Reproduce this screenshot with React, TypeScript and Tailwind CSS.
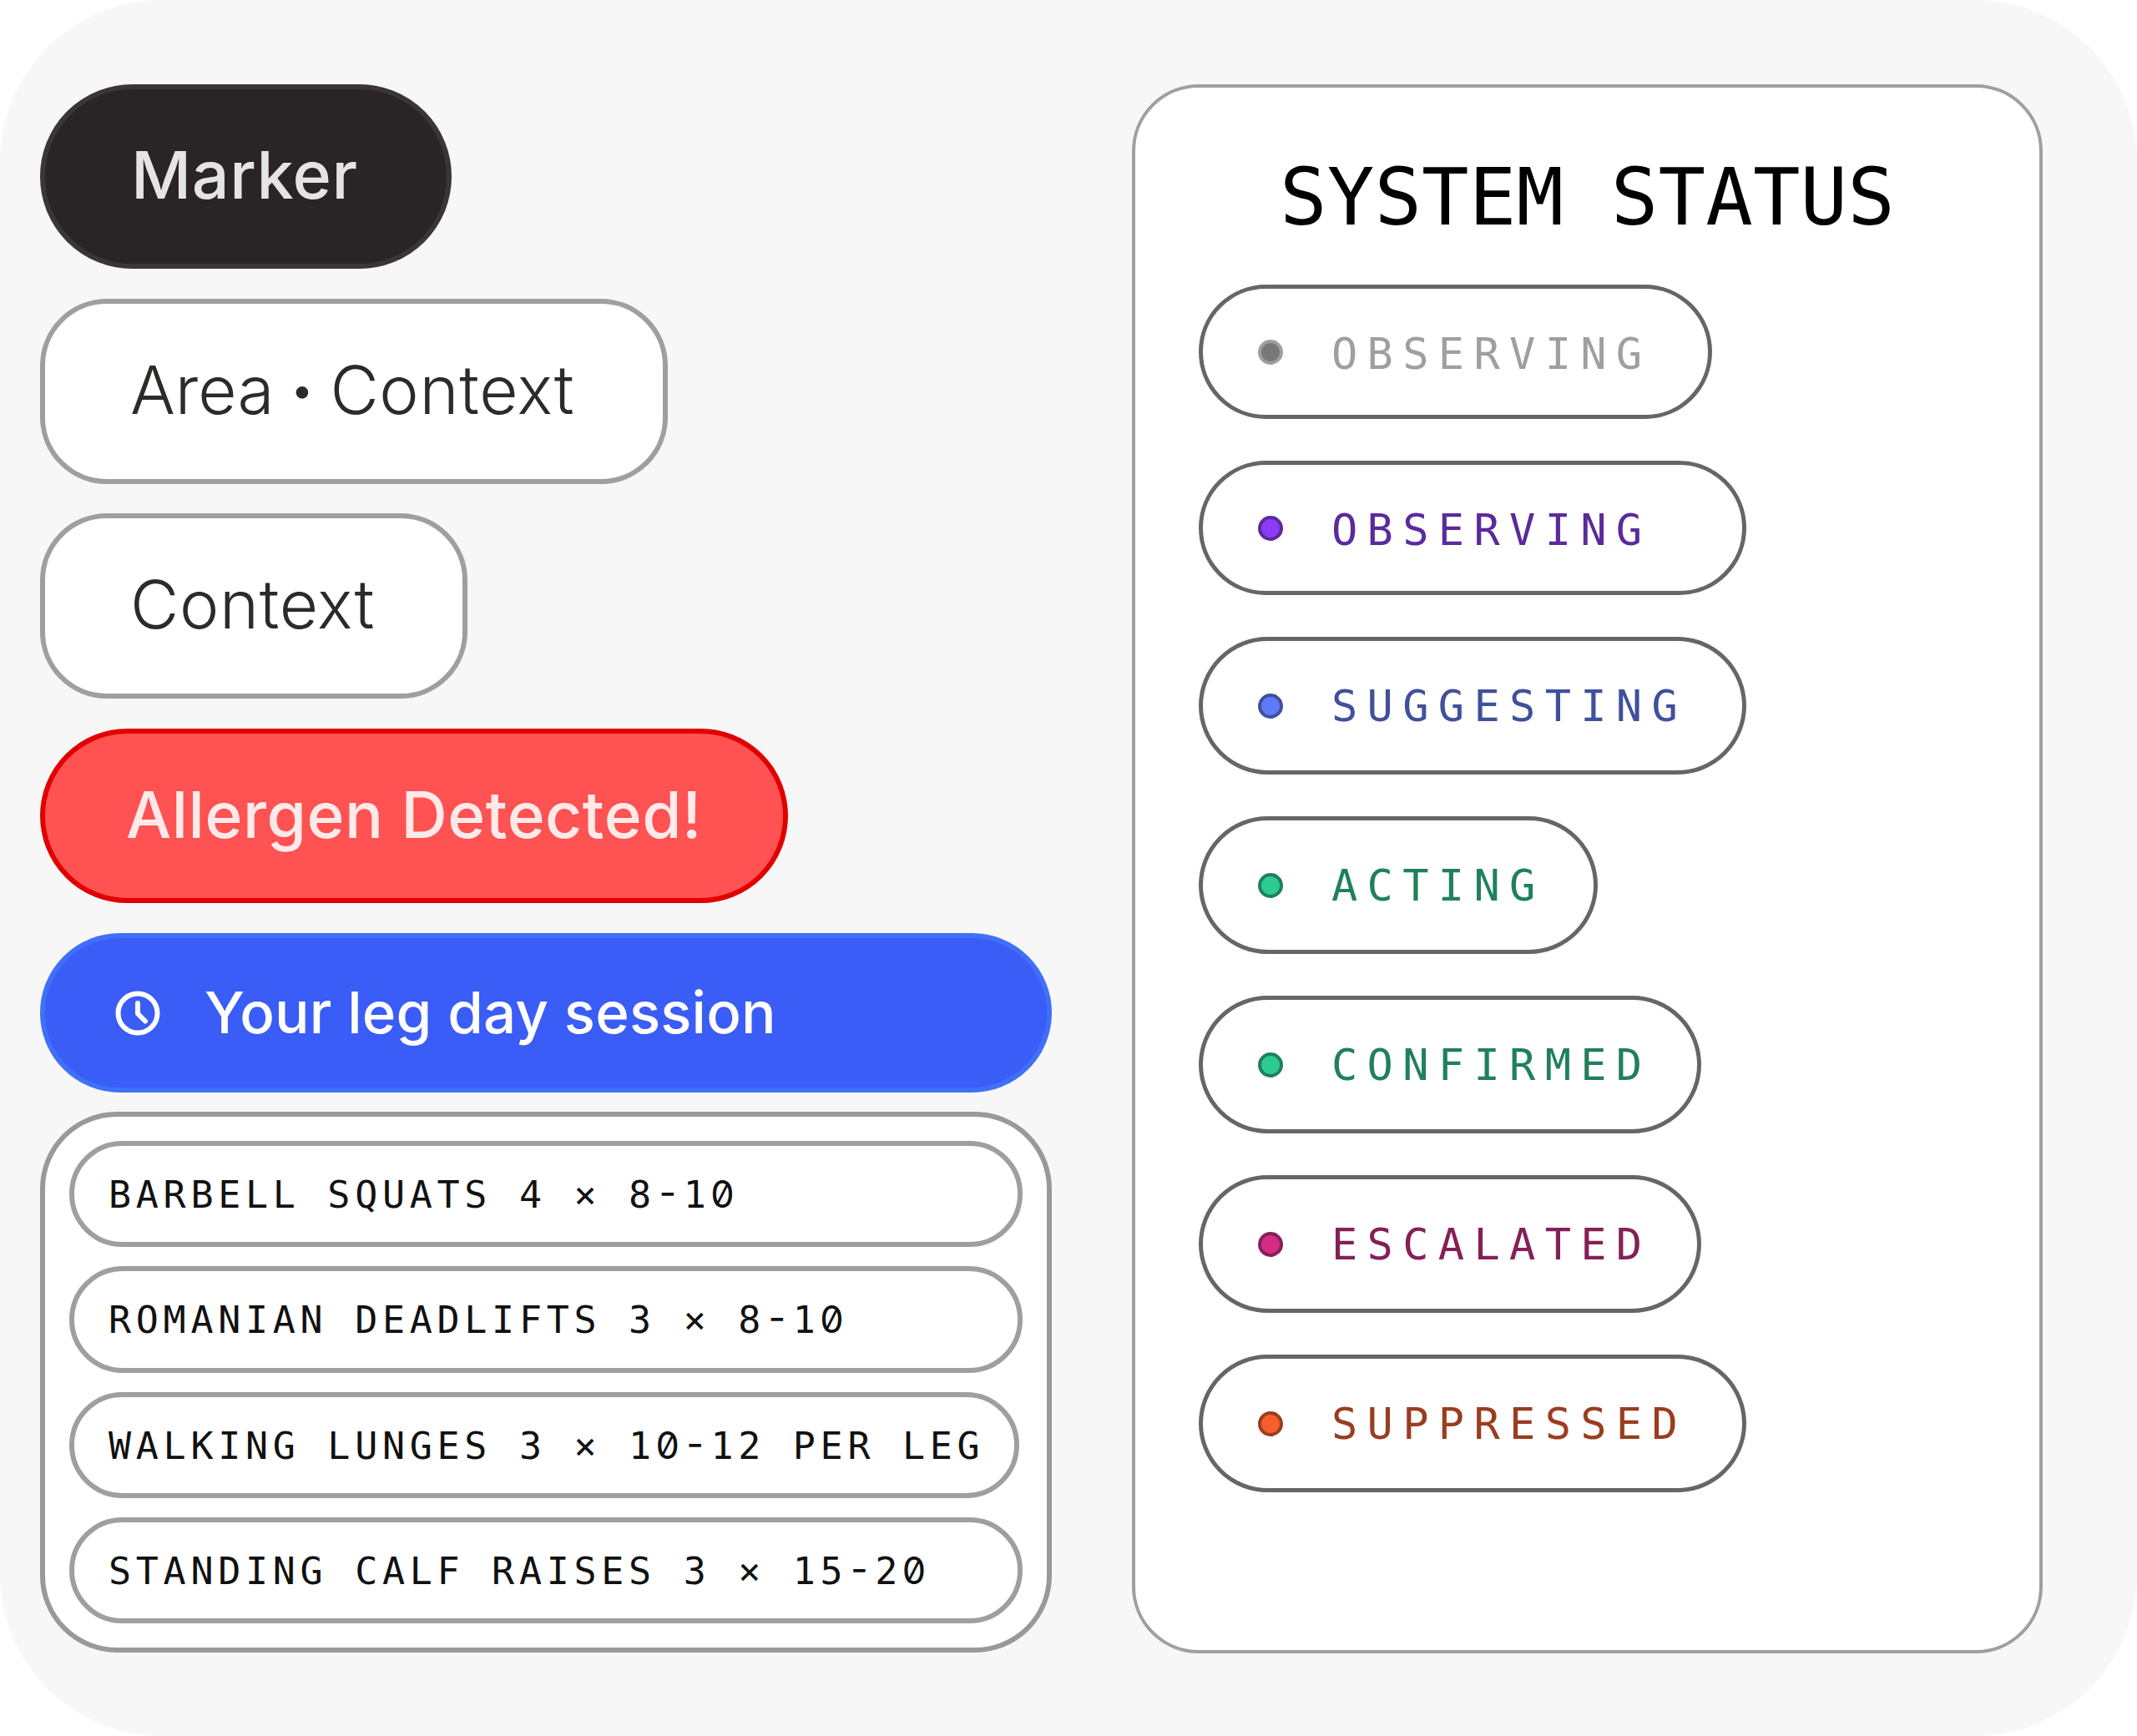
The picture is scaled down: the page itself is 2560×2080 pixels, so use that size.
import clsx from "clsx";

const exercises = [
  { label: "BARBELL SQUATS 4 × 8-10", width: "w-[1142px]" },
  { label: "ROMANIAN DEADLIFTS 3 × 8-10", width: "w-[1142px]" },
  { label: "WALKING LUNGES 3 × 10-12 PER LEG", width: "w-[1138px]" },
  { label: "STANDING CALF RAISES 3 × 15-20", width: "w-[1142px]" },
];

const statuses = [
  { label: "OBSERVING", box: "w-[615px] h-[161px] mb-[50px]", text: "text-[#9f9f9f] pt-[4px]", dot: "bg-[#787878] border-[#9f9f9f]" },
  { label: "OBSERVING", box: "w-[656px] h-[161px] mb-[50px]", text: "text-[#5b2a9b] pt-[4px]", dot: "bg-[#8c3cf7] border-[#5b2a9b]" },
  { label: "SUGGESTING", box: "w-[656px] h-[165px] mb-[50px]", text: "text-[#41509b] pt-[1px]", dot: "bg-[#5f7af7] border-[#41509b]" },
  { label: "ACTING", box: "w-[478px] h-[165px] mb-[50px]", text: "text-[#20805c] pt-[1px]", dot: "bg-[#2dcb91] border-[#20805c]" },
  { label: "CONFIRMED", box: "w-[602px] h-[165px] mb-[50px]", text: "text-[#20805c] pt-[1px]", dot: "bg-[#2dcb91] border-[#20805c]" },
  { label: "ESCALATED", box: "w-[602px] h-[165px] mb-[50px]", text: "text-[#852057] pt-[1px]", dot: "bg-[#d62a87] border-[#852057]" },
  { label: "SUPPRESSED", box: "w-[656px] h-[165px]", text: "text-[#9a3d1f] pt-[1px]", dot: "bg-[#f65f2d] border-[#9a3d1f]" },
];

const sans = "font-['Inter',sans-serif] leading-none whitespace-nowrap";
const mono = "font-['DejaVu_Sans_Mono',monospace] leading-none whitespace-pre";

function ClockIcon() {
  return (
    <svg className="w-[54px] h-[54px] shrink-0" viewBox="0 0 54 54" fill="none" stroke="white" strokeWidth="6" strokeLinecap="round" strokeLinejoin="round">
      <circle cx="27" cy="27" r="23.5" />
      <path d="M27 15v12.5l9 9" />
    </svg>
  );
}

// Slashed zeros and cap-height dashes come from Inter, set on the mono cell width
function MonoLabel({ text }: { text: string }) {
  return (
    <span className={clsx(mono, "pt-px text-[45px] tracking-[5.7px] text-[#111111]")}>
      {text.split(/([0-])/).map((part, i) =>
        part === "0" || part === "-" ? (
          <span key={i} className="inline-block w-[32.8px] -ml-[2.5px] mr-[2.5px] text-center tracking-normal font-['Inter',sans-serif] font-normal leading-none [font-feature-settings:'zero','case']">
            {part}
          </span>
        ) : (
          part
        )
      )}
    </span>
  );
}

function Tags() {
  return (
    <div className="flex flex-col items-start">
      <div className="w-[493px] h-[221px] mb-9 pl-[103px] pb-[5px] flex items-center rounded-full border-6 border-[#3a3538] bg-[#292526]">
        <span className={clsx(sans, "text-[79px] tracking-[0.6px] font-medium text-[#e4e4e4]")}>Marker</span>
      </div>
      <div className="w-[752px] h-[222px] mb-[35px] pl-[102px] pb-[5px] flex items-center rounded-[80px] border-6 border-[#9f9f9f] bg-white">
        <span className={clsx(sans, "text-[80px] font-light text-[#2b2b2a]")}>
          Area<span className="inline-block w-[67px] text-center text-[54px] leading-none align-[10px]">•</span>
          <span className="tracking-[0.7px]">Context</span>
        </span>
      </div>
      <div className="w-[512px] h-[222px] mb-9 pl-[102px] pb-[5px] flex items-center rounded-[80px] border-6 border-[#9f9f9f] bg-white">
        <span className={clsx(sans, "text-[80px] tracking-[0.7px] font-light text-[#2b2b2a]")}>Context</span>
      </div>
      <div className="w-[896px] h-[209px] mb-9 pl-[97px] pb-[2px] flex items-center rounded-full border-6 border-[#e10000] bg-[#ff5252]">
        <span className={clsx(sans, "text-[76.5px] tracking-[0.55px] font-medium text-[#ffe9e9]")}>Allergen Detected!</span>
      </div>
    </div>
  );
}

function Session() {
  return (
    <div className="w-[1212px]">
      <div className="h-[191px] mb-[23px] pl-[84px] flex items-center gap-[53px] rounded-full border-6 border-[#3f70f7] bg-[#3a5cf7]">
        <ClockIcon />
        <span className={clsx(sans, "pb-px text-[69px] tracking-[0.2px] font-medium text-white")}>Your leg day session</span>
      </div>
      <div className="h-[648px] pl-[29px] pt-[29px] flex flex-col gap-[23px] rounded-[92px] border-6 border-[#999999] bg-white">
        {exercises.map((e) => (
          <div key={e.label} className={clsx("h-[127.3px] shrink-0 pl-[41px] flex items-center rounded-full border-6 border-[#9f9f9f]", e.width)}>
            <MonoLabel text={e.label} />
          </div>
        ))}
      </div>
    </div>
  );
}

function SystemStatus() {
  return (
    <div className="w-[1091px] h-[1880px] pt-[85px] pl-[76px] rounded-[80px] border-4 border-[#9f9f9f] bg-white">
      <h2 className={clsx(mono, "h-[151px] pl-[97px] text-[94px] tracking-[0.1px] text-black")}>SYSTEM STATUS</h2>
      {statuses.map((s, i) => (
        <div key={i} className={clsx("flex items-center rounded-full border-5 border-[#666666] pl-[66px] gap-[58px]", s.box)}>
          <span className={clsx("size-[30px] shrink-0 rounded-full border-4", s.dot)} />
          <span className={clsx(mono, "text-[52px] tracking-[11.3px]", s.text)}>{s.label}</span>
        </div>
      ))}
    </div>
  );
}

export default function App() {
  return (
    <div className="w-[2560px] h-[2080px] bg-white">
      <div className="w-full h-full pt-[101px] pl-12 flex items-start gap-24 rounded-[194px] bg-[#f7f7f7]">
        <div className="w-[1212px]">
          <Tags />
          <Session />
        </div>
        <SystemStatus />
      </div>
    </div>
  );
}
